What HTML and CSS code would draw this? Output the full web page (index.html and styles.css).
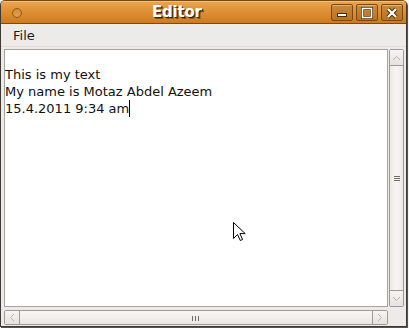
FILE: index.html
```html
<!DOCTYPE html>
<html>
<head>
<meta charset="utf-8">
<link rel="stylesheet" href="styles.css">
</head>
<body>
<div class="window">
  <div class="titlebar">
    <span class="menu-dot"></span>
    <span class="title">Editor</span>
    <div class="buttons">
      <span class="wbtn"><svg width="12" height="10" viewBox="0 0 12 10"><rect x="1.5" y="5.5" width="9" height="3" fill="#fff" stroke="#4a2c08" stroke-width="1"/></svg></span>
      <span class="wbtn"><svg width="12" height="12" viewBox="0 0 12 12"><rect x="1.5" y="1.5" width="9" height="9" fill="none" stroke="#4a2c08" stroke-width="3"/><rect x="1.5" y="1.5" width="9" height="9" fill="none" stroke="#fff" stroke-width="1.6"/></svg></span>
      <span class="wbtn"><svg width="12" height="12" viewBox="0 0 12 12"><path d="M2 2L10 10M10 2L2 10" stroke="#4a2c08" stroke-width="4"/><path d="M2 2L10 10M10 2L2 10" stroke="#fff" stroke-width="2.2"/></svg></span>
    </div>
  </div>
  <div class="menubar"><span class="menu-item">File</span></div>
  <div class="content">
    <div class="textarea">
      <div class="line">This is my text</div>
      <div class="line">My name is Motaz Abdel Azeem</div>
      <div class="line">15.4.2011 9:34 am<span class="caret"></span></div>
    </div>
    <div class="vscroll">
      <div class="sbtn"><svg width="9" height="6" viewBox="0 0 9 6"><path d="M1 5L4.5 1.5L8 5" fill="none" stroke="#b6b2ab" stroke-width="1"/></svg></div>
      <div class="vthumb"><span class="vgrip"></span></div>
      <div class="sbtn"><svg width="9" height="6" viewBox="0 0 9 6"><path d="M1 1L4.5 4.5L8 1" fill="none" stroke="#b6b2ab" stroke-width="1"/></svg></div>
    </div>
    <div class="hscroll">
      <div class="sbtn"><svg width="6" height="9" viewBox="0 0 6 9"><path d="M5 1L1.5 4.5L5 8" fill="none" stroke="#b6b2ab" stroke-width="1"/></svg></div>
      <div class="hthumb"><span class="hgrip"></span></div>
      <div class="sbtn"><svg width="6" height="9" viewBox="0 0 6 9"><path d="M1 1L4.5 4.5L1 8" fill="none" stroke="#b6b2ab" stroke-width="1"/></svg></div>
    </div>
    <div class="corner"></div>
  </div>
  <svg class="pointer" width="13" height="20" viewBox="0 0 13 20"><path d="M0.5 0.5V16.5L4.5 12.5L7.3 18.5L9.6 17.5L6.9 11.6H12.2Z" fill="#fff" stroke="#000" stroke-width="1" stroke-linejoin="miter"/></svg>
</div>
</body>
</html>
```
FILE: styles.css
```css
html, body {
  margin: 0;
  padding: 0;
}
body {
  width: 409px;
  height: 328px;
  background: #f4f4f4;
  font-family: "DejaVu Sans", sans-serif;
  overflow: hidden;
}
.window {
  position: relative;
  width: 405px;
  height: 325px;
  border: 1px solid #3f3a33;
  border-top-color: #7a4b14;
  border-radius: 5px 5px 0 0;
  background: #edebe9;
  box-shadow: 1px 1px 0 #555;
  display: flex;
  flex-direction: column;
  overflow: hidden;
}
.titlebar {
  height: 22px;
  flex: none;
  display: flex;
  align-items: center;
  background: linear-gradient(#eaa552 0%, #df9134 45%, #cc7b21 100%);
  border-bottom: 1px solid #7b4a12;
  position: relative;
  box-shadow: inset 0 1px 0 #f3bd7a;
}
.menu-dot {
  width: 8px;
  height: 8px;
  border-radius: 50%;
  border: 1px solid #8e5c1e;
  background: radial-gradient(circle at 50% 70%, #e6a04b, #c98530);
  margin-left: 11px;
  margin-top: 1px;
}
.title {
  position: absolute;
  left: 151px;
  top: 2px;
  font-weight: bold;
  font-size: 15px;
  color: #fff;
  text-shadow: 1px 1px 0 #3a2208, 2px 2px 0 rgba(58,34,8,0.5);
  letter-spacing: -0.2px;
}
.buttons {
  margin-left: auto;
  margin-right: 3px;
  display: flex;
  gap: 3px;
  margin-top: 1px;
}
.wbtn {
  width: 20px;
  height: 15px;
  border: 1px solid #7a4913;
  border-radius: 2px;
  background: linear-gradient(#c98a3e, #b8731f);
  box-shadow: inset 0 1px 0 rgba(255,220,170,0.5);
  display: flex;
  align-items: center;
  justify-content: center;
}
.menubar {
  height: 22px;
  flex: none;
  display: flex;
  align-items: center;
  padding-left: 12px;
  background: #edebe9;
  border-bottom: 1px solid #e2dfdb;
}
.menu-item {
  font-size: 13px;
  color: #1c1c1c;
  margin-top: 1px;
}
.content {
  display: grid;
  grid-template-columns: 384px 15px;
  grid-template-rows: 258px 15px;
  column-gap: 1px;
  row-gap: 3px;
  padding: 2px 0 0 3px;
}
.textarea {
  border: 1px solid #a7a29a;
  background: #fff;
  padding: 16px 0 0 0;
  font-size: 13px;
  line-height: 17px;
  color: #111;
}
.caret {
  display: inline-block;
  width: 1px;
  height: 17px;
  background: #000;
  vertical-align: top;
  margin-left: 0;
}
.vscroll {
  border: 1px solid #9e9a93;
  border-radius: 2px;
  display: flex;
  flex-direction: column;
  background: #e8e5e2;
}
.hscroll {
  border: 1px solid #9e9a93;
  border-radius: 2px;
  display: flex;
  background: #e8e5e2;
}
.sbtn {
  flex: none;
  width: 13px;
  height: 13px;
  display: flex;
  align-items: center;
  justify-content: center;
  background: linear-gradient(#f6f5f3, #e6e2de);
}
.vscroll .sbtn { height: 15px; }
.hscroll .sbtn { width: 14px; }
.vthumb {
  flex: 1;
  border-top: 1px solid #9e9a93;
  border-bottom: 1px solid #9e9a93;
  background: linear-gradient(90deg, #ece8e4, #f8f6f5 50%, #ebe7e3);
  display: flex;
  align-items: center;
  justify-content: center;
}
.hthumb {
  flex: 1;
  border-left: 1px solid #9e9a93;
  border-right: 1px solid #9e9a93;
  background: linear-gradient(#f8f6f5, #ebe7e3);
  display: flex;
  align-items: center;
  justify-content: center;
}
.vgrip {
  width: 6px;
  height: 6px;
  background: repeating-linear-gradient(#6f6b65 0 1px, transparent 1px 2px);
  margin-left: 1px;
  margin-top: 2px;
}
.hgrip {
  width: 7px;
  height: 5px;
  background: repeating-linear-gradient(90deg, #6f6b65 0 1px, transparent 1px 3px);
  margin-right: 2px;
  margin-top: 1px;
}
.corner {
  background: #edebe9;
}
.pointer {
  position: absolute;
  left: 232px;
  top: 221px;
}
```
